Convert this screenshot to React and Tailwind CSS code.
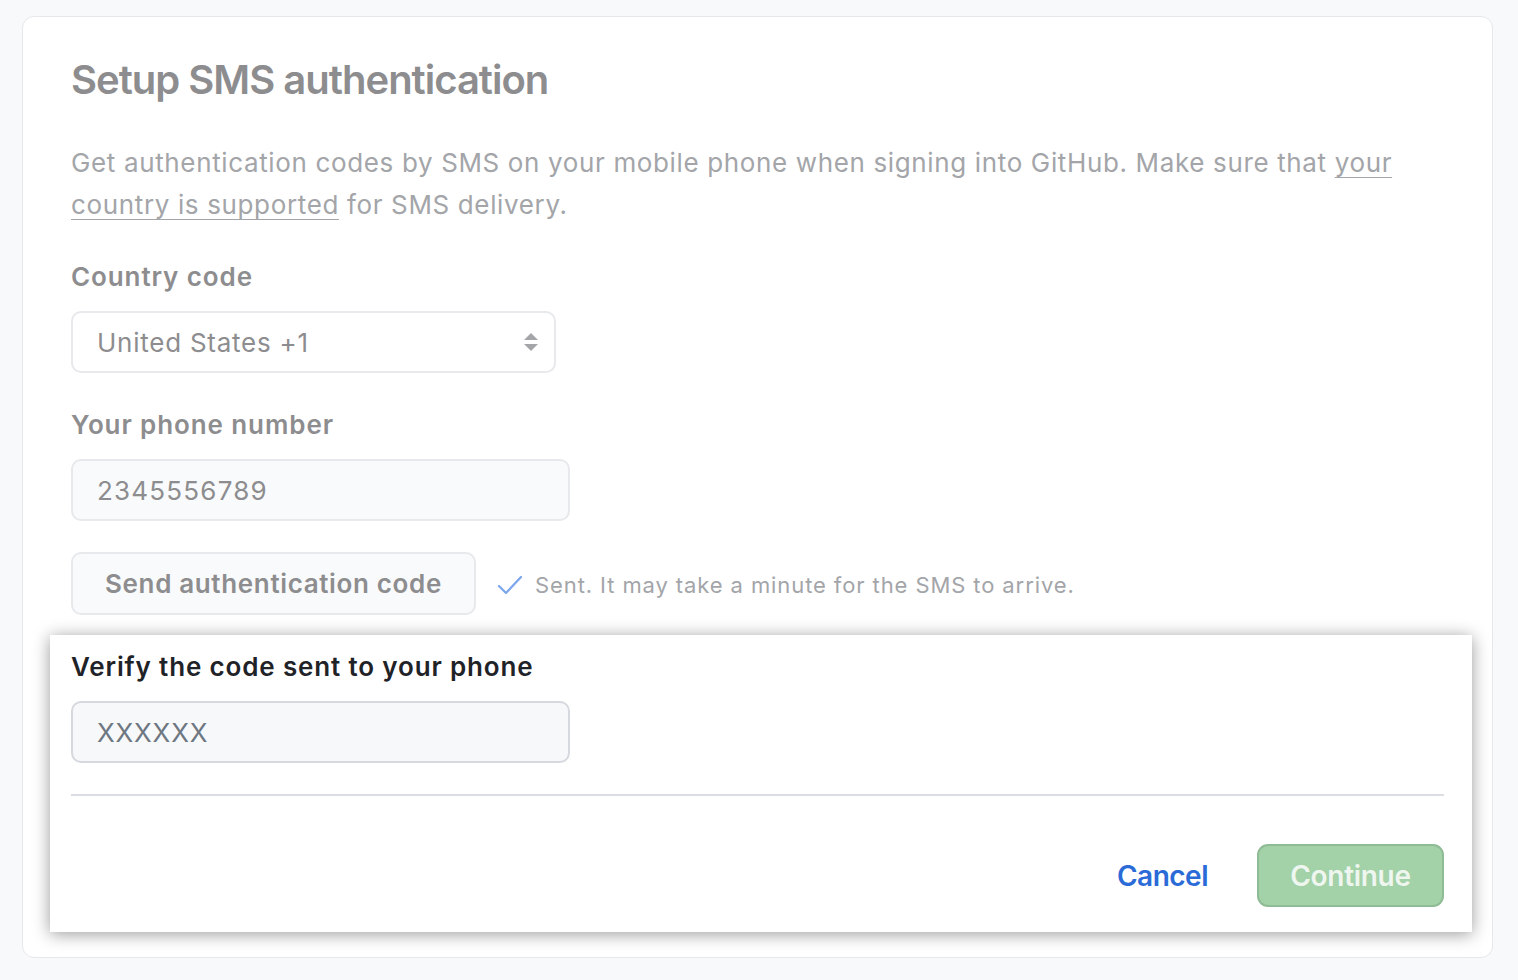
import React from "react";

export default function App() {
  return (
    <div
      className="min-h-screen w-full bg-[#f8f9fb] pt-4 pl-[22px]"
      style={{ fontFamily: "Inter, 'Noto Sans', sans-serif" }}
    >
      <div className="w-[1471px] h-[942px] rounded-[12px] border border-[#e6e8eb] bg-white pt-[39px] pl-[48px] pr-[48px]">
        <h1 className="text-[40px] leading-[48px] font-semibold text-[#8d8d8f] tracking-[-1px]">
          Setup SMS authentication
        </h1>
        <p className="mt-[38px] text-[26px] leading-[42px] text-[#a3a5a9] tracking-[0.64px]">
          Get authentication codes by SMS on your mobile phone when signing into GitHub. Make sure that{" "}
          <span className="underline decoration-1 underline-offset-[5px]">your country is supported</span> for SMS
          delivery.
        </p>

        <div className="mt-[33px] text-[26px] leading-[36px] font-semibold text-[#8d8d8f] tracking-[0.9px]">Country code</div>
        <div className="mt-[16px] flex h-[62px] w-[485px] items-center justify-between rounded-[10px] border-2 border-[#e7e9ec] bg-white pl-[24px] pr-[14px]">
          <span className="text-[26px] text-[#8d8d8f] tracking-[0.75px]">United States +1</span>
          <svg width="18" height="22" viewBox="0 0 18 22">
            <path d="M9 2 L16 9 L2 9 Z" fill="#a3a5a9" />
            <path d="M9 20 L16 13 L2 13 Z" fill="#a3a5a9" />
          </svg>
        </div>

        <div className="mt-[34px] text-[26px] leading-[36px] font-semibold text-[#8d8d8f] tracking-[0.9px]">Your phone number</div>
        <div className="mt-[16px] flex h-[62px] w-[499px] items-center rounded-[10px] border-2 border-[#e7e9ec] bg-[#f9fafb] pl-[24px]">
          <span className="text-[26px] text-[#8d8d8f] tracking-[1.2px]">2345556789</span>
        </div>

        <div className="mt-[31px] flex items-center">
          <div className="flex h-[63px] w-[405px] items-center justify-center rounded-[10px] border-2 border-[#e7e9ec] bg-[#f9fafb]">
            <span className="text-[26px] font-semibold text-[#8d8d8f] tracking-[0.65px]">Send authentication code</span>
          </div>
          <svg className="ml-[21px] mt-[2px]" width="26" height="22" viewBox="0 0 26 22">
            <path d="M2 12 L9 19 L24 3" fill="none" stroke="#7ba6ee" strokeWidth="2.2" strokeLinecap="round" strokeLinejoin="round" />
          </svg>
          <span className="ml-[12px] mt-[4px] text-[22px] text-[#a3a5a9] tracking-[0.9px]">
            Sent. It may take a minute for the SMS to arrive.
          </span>
        </div>

        <div className="mt-[20px] -ml-[21px] -mr-[28px] bg-white pt-[14px] pl-[21px] pr-[28px] pb-[25px] shadow-[0_2px_16px_rgba(0,0,0,0.4)]">
          <div className="text-[26px] leading-[36px] font-semibold text-[#1f2328] tracking-[0.85px]">Verify the code sent to your phone</div>
          <div className="mt-[16px] flex h-[62px] w-[499px] items-center rounded-[10px] border-2 border-[#d5d9de] bg-[#f6f8fa] pl-[24px]">
            <span className="text-[26px] text-[#6e7781] tracking-[0.8px]">XXXXXX</span>
          </div>
          <div className="mt-[31px] h-[2px] w-full bg-[#dadee3]" />
          <div className="mt-[48px] flex items-center justify-end">
            <span className="mr-[49px] text-[28px] font-semibold text-[#2b6bd8] tracking-[-0.5px]">Cancel</span>
            <div className="flex h-[63px] w-[187px] items-center justify-center rounded-[11px] border-2 border-[#8fbb95] bg-[#a3d1a8]">
              <span className="text-[28px] font-semibold text-[#eef6ef] tracking-[-0.3px]">Continue</span>
            </div>
          </div>
        </div>
      </div>
    </div>
  );
}
